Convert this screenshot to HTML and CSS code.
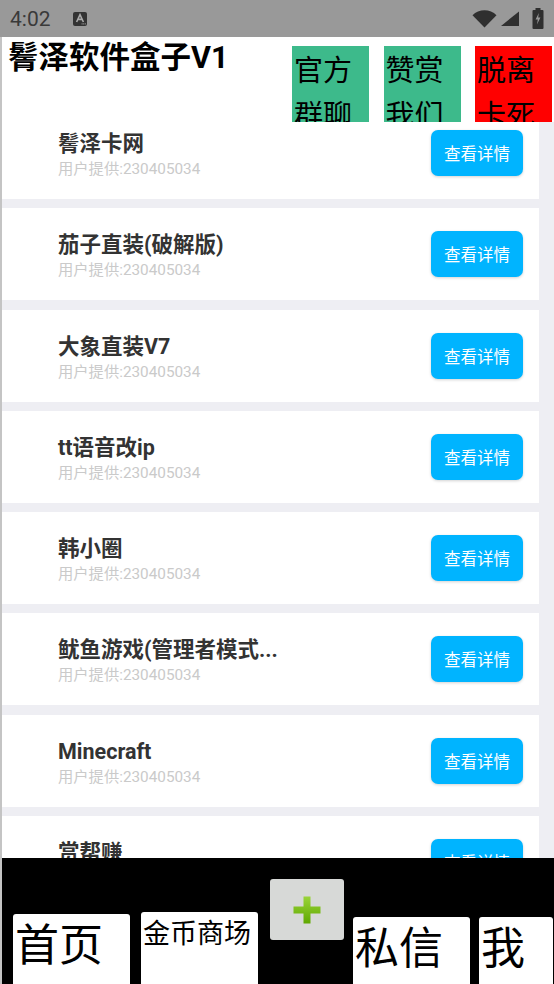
FILE: index.html
```html
<!DOCTYPE html>
<html lang="zh-CN">
<head>
  <meta charset="UTF-8">
  <meta name="viewport" content="width=device-width, initial-scale=1.0">
  <title>鬌泽软件盒子V1</title>
  <link rel="stylesheet" href="styles.css">
</head>
<body>
  <!-- 状态栏 -->
  <div class="statusbar">
    <span class="time">4:02</span>
    <span class="notice">
      <svg width="14" height="14" viewBox="0 0 14 14">
        <rect x="0" y="0" width="14" height="14" rx="2" fill="#333"/>
        <path d="M3.6 10 L7 2.6 L10.4 10 M5 7.4 H9" stroke="#aaa" stroke-width="1.6" fill="none"/>
        <rect x="8.6" y="11.4" width="1" height="1" fill="#aaa"/>
        <rect x="10.2" y="11.4" width="1" height="1" fill="#aaa"/>
        <rect x="11.8" y="11.4" width="1" height="1" fill="#aaa"/>
      </svg>
    </span>
    <span class="sys-icons">
      <svg width="25" height="18" viewBox="0 0 25 18">
        <path d="M0.5 5.2 A17 17 0 0 1 24.5 5.2 L12.5 17.6 Z" fill="#2f2f2f"/>
      </svg>
      <svg width="19" height="15" viewBox="0 0 19 15">
        <path d="M0 15 L18 15 L18 0.5 Z" fill="#2f2f2f"/>
      </svg>
      <svg width="12" height="21" viewBox="0 0 12 21">
        <rect x="3.5" y="0" width="5" height="2" fill="#2f2f2f"/>
        <rect x="0.5" y="2" width="11" height="19" rx="1" fill="#2f2f2f"/>
        <path d="M6.8 5 L3.6 11.6 H5.8 L5 16.4 L8.4 9.6 H6.2 Z" fill="#999"/>
      </svg>
    </span>
  </div>

  <div class="app">
    <header class="topbar">
      <h1>鬌泽软件盒子V1</h1>
      <div class="actions">
        <div class="act green">官方群聊</div>
        <div class="act green">赞赏我们</div>
        <div class="act red">脱离卡死</div>
      </div>
    </header>

    <!-- 软件列表 -->
    <main class="list">
      <div class="list-inner" id="apps"></div>
    </main>

    <!-- 底部导航 -->
    <nav class="tabbar">
      <div class="tab big home">首页</div>
      <div class="tab shop">金币商场</div>
      <div class="tab plus">
        <svg width="28" height="28" viewBox="0 0 28 28">
          <defs>
            <linearGradient id="g" x1="0" y1="0" x2="0" y2="1">
              <stop offset="0" stop-color="#9ad43a"/>
              <stop offset="1" stop-color="#5fa800"/>
            </linearGradient>
          </defs>
          <path d="M10.5 0.5 H17.5 V10.5 H27.5 V17.5 H17.5 V27.5 H10.5 V17.5 H0.5 V10.5 H10.5 Z" fill="url(#g)"/>
        </svg>
      </div>
      <div class="tab big msg">私信</div>
      <div class="tab big me">我</div>
    </nav>
  </div>

  <script>
    const apps = [
      '鬌泽卡网',
      '茄子直装(破解版)',
      '大象直装V7',
      'tt语音改ip',
      '韩小圈',
      '鱿鱼游戏(管理者模式...',
      'Minecraft',
      '赏帮赚'
    ];

    const list = document.getElementById('apps');
    apps.forEach(name => {
      const card = document.createElement('div');
      card.classList.add('card');
      card.innerHTML = `
        <div class="info">
          <div class="name">${name}</div>
          <div class="user">用户提供:230405034</div>
        </div>
        <button class="detail-btn">查看详情</button>
      `;
      list.appendChild(card);
    });
  </script>
</body>
</html>
```

FILE: styles.css
```css
body {
  margin: 0;
  width: 554px;
  height: 984px;
  overflow: hidden;
  display: flex;
  flex-direction: column;
  background-color: #c4c4c4;
  font-family: Roboto, "Noto Sans CJK SC", sans-serif;
}

.statusbar {
  height: 37px;
  flex-shrink: 0;
  background-color: #999999;
  display: flex;
  align-items: center;
  padding: 0 10px;
  color: #3a3a3a;
}

.time {
  font-size: 21px;
  margin-right: 22px;
}

.notice {
  display: flex;
  margin-top: 1px;
}

.sys-icons {
  margin-left: auto;
  display: flex;
  align-items: center;
  gap: 4px;
}

.sys-icons svg:last-child {
  margin-left: 8px;
}

.app {
  flex: 1;
  display: flex;
  flex-direction: column;
  margin-left: 2px;
  min-height: 0;
}

.topbar {
  height: 85px;
  flex-shrink: 0;
  display: flex;
  justify-content: space-between;
  background-color: #ffffff;
  overflow: hidden;
  position: relative;
  z-index: 1;
}

h1 {
  margin: 0;
  padding: 3px 0 0 6px;
  font-size: 30.5px;
  line-height: 36px;
  font-weight: bold;
  color: #000;
}

.actions {
  display: flex;
  gap: 14.5px;
  padding: 9px 2px 0 0;
}

.act {
  width: 75px;
  padding-left: 2px;
  height: 76px;
  font-family: "Noto Sans CJK SC", sans-serif;
  font-size: 29px;
  line-height: 45px;
  color: #000;
  overflow: hidden;
}

.green {
  background-color: #3dba8b;
}

.red {
  background-color: #ff0000;
}

.list {
  flex: 1;
  overflow: hidden;
  background-color: #eeeef3;
  min-height: 0;
}

.list-inner {
  margin-top: -15px;
  padding-right: 15px;
}

.card {
  height: 92px;
  margin-bottom: 9.3px;
  background-color: #ffffff;
  display: flex;
  align-items: center;
  padding: 0 16px 0 56px;
}

.info {
  flex: 1;
  padding-top: 4px;
}

.name {
  font-size: 21.5px;
  line-height: 28px;
  font-weight: bold;
  color: #333;
}

.user {
  font-size: 15.3px;
  line-height: 22px;
  color: #cacaca;
}

.detail-btn {
  width: 92px;
  height: 46px;
  border: none;
  border-radius: 7px;
  background-color: #00b4ff;
  color: white;
  font-family: "Noto Sans CJK SC", sans-serif;
  font-size: 16.5px;
  box-shadow: 0 1px 3px rgba(0, 0, 0, 0.18);
  padding: 0;
}

.tabbar {
  height: 126px;
  flex-shrink: 0;
  background-color: #000;
  display: flex;
  align-items: flex-start;
  overflow: hidden;
  position: relative;
  z-index: 1;
}

.tab {
  background-color: #ffffff;
  border-radius: 3px;
  height: 90px;
  color: #000;
  font-family: "Noto Sans CJK SC", sans-serif;
  padding-left: 2px;
  box-sizing: border-box;
}

.big {
  font-size: 44px;
  line-height: 56px;
}

.home {
  width: 117px;
  margin: 56px 0 0 11px;
}

.shop {
  width: 117px;
  margin: 54px 0 0 11px;
  font-size: 27px;
  line-height: 40px;
}

.plus {
  width: 74px;
  height: 61px;
  margin: 21px 0 0 12px;
  background-color: #d7d9d7;
  display: flex;
  align-items: center;
  justify-content: center;
  padding: 0;
}

.msg {
  width: 117px;
  margin: 59px 0 0 9px;
}

.me {
  width: 74px;
  margin: 59px 0 0 9px;
}
```
